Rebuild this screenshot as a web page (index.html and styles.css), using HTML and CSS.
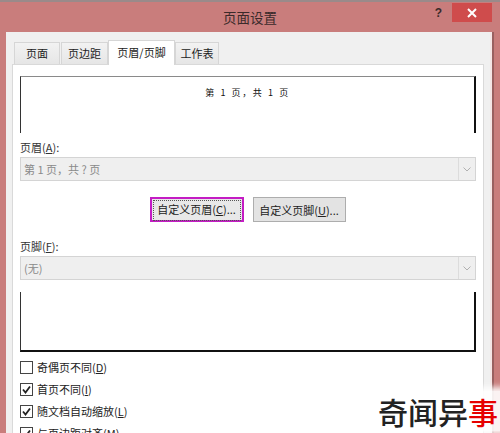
FILE: index.html
```html
<!DOCTYPE html>
<html lang="zh-CN">
<head>
	<meta charset="UTF-8">
	<title>页面设置</title>
	<link rel="stylesheet" href="styles.css">
</head>
<body>
	<div class="window">
		<div class="titlebar">
			<div></div>
			<div class="title">页面设置</div>
			<div class="controls">
				<span class="help">?</span>
				<span class="close">
					<svg width="10" height="10" viewBox="0 0 10 10"><path d="M1 1 L9 9 M9 1 L1 9" stroke="#fff" stroke-width="2"/></svg>
				</span>
			</div>
		</div>

		<div class="frame">
			<div class="tabs">
				<div class="tab t1">页面</div>
				<div class="tab t2">页边距</div>
				<div class="tab t3 active">页眉/页脚</div>
				<div class="tab t4">工作表</div>
			</div>

			<div class="panel">
				<div class="preview head-preview">
					<span class="preview-text">第 1 页，共 1 页</span>
				</div>

				<div class="label">页眉(<u>A</u>):</div>
				<div class="combo">
					<span class="combo-text">第 1 页，共 ? 页</span>
					<span class="combo-arrow">
						<svg width="8" height="5" viewBox="0 0 8 5"><path d="M0.5 0.5 L4 4 L7.5 0.5" fill="none" stroke="#b0b0b0" stroke-width="1"/></svg>
					</span>
				</div>

				<div class="buttons">
					<button class="btn focused"><span>自定义页眉(<u>C</u>)...</span></button>
					<button class="btn">自定义页脚(<u>U</u>)...</button>
				</div>

				<div class="label label-foot">页脚(<u>F</u>):</div>
				<div class="combo">
					<span class="combo-text">(无)</span>
					<span class="combo-arrow">
						<svg width="8" height="5" viewBox="0 0 8 5"><path d="M0.5 0.5 L4 4 L7.5 0.5" fill="none" stroke="#b0b0b0" stroke-width="1"/></svg>
					</span>
				</div>

				<div class="preview foot-preview"></div>

				<div class="checks">
					<label class="check"><span class="box"></span>奇偶页不同(<u>D</u>)</label>
					<label class="check"><span class="box checked"><svg width="11" height="11" viewBox="0 0 11 11"><path d="M2 5.5 L4.5 8.5 L9 2.5" fill="none" stroke="#222" stroke-width="1.8"/></svg></span>首页不同(<u>I</u>)</label>
					<label class="check"><span class="box checked"><svg width="11" height="11" viewBox="0 0 11 11"><path d="M2 5.5 L4.5 8.5 L9 2.5" fill="none" stroke="#222" stroke-width="1.8"/></svg></span>随文档自动缩放(<u>L</u>)</label>
					<label class="check"><span class="box checked"><svg width="11" height="11" viewBox="0 0 11 11"><path d="M2 5.5 L4.5 8.5 L9 2.5" fill="none" stroke="#222" stroke-width="1.8"/></svg></span>与页边距对齐(<u>M</u>)</label>
				</div>
			</div>
		</div>

		<div class="watermark">奇闻异<span class="red">事</span></div>
	</div>
</body>
</html>
```

FILE: styles.css
```css
html, body {
	margin: 0;
	padding: 0;
}

body {
	font-family: "Noto Sans CJK SC", "Noto Sans", sans-serif;
	font-size: 11px;
	color: #222;
	background: #c97d7c;
}

.window {
	position: relative;
	width: 500px;
	height: 433px;
	overflow: hidden;
	background: #c97d7c;
	border-top: 2px solid #9a8a8a;
	box-sizing: border-box;
}

.titlebar {
	display: grid;
	grid-template-columns: 1fr auto 1fr;
	align-items: start;
	height: 30px;
}

.title {
	margin-top: 5px;
	font-size: 13.5px;
	line-height: 20px;
	color: #3a2a2a;
}

.controls {
	display: flex;
	justify-content: flex-end;
	align-items: center;
	padding-right: 8px;
	padding-top: 1px;
}

.help {
	font-family: "Liberation Sans", sans-serif;
	font-weight: bold;
	font-size: 12px;
	color: #3a2a2a;
	margin-right: 10px;
}

.close {
	display: flex;
	align-items: center;
	justify-content: center;
	width: 40px;
	height: 19px;
	background: #cf4c4c;
}

.frame {
	margin: 0 10px 0 6px;
	padding: 8px 6px 0;
	height: 401px;
	box-sizing: border-box;
	background: #f0f0f0;
	box-shadow: 2px 0 0 #f4e6e6, 4px 0 0 #9a6060;
}

.tabs {
	display: flex;
	align-items: flex-end;
	padding-left: 2px;
	height: 24px;
}

.tab {
	height: 22px;
	box-sizing: border-box;
	border: 1px solid #d6d6d6;
	border-bottom: none;
	background: linear-gradient(#f2f2f2, #e6e6e6);
	text-align: center;
	line-height: 21px;
	margin-right: 1px;
}

.t1 { width: 46px; }
.t2 { width: 47px; }
.t3 { width: 67px; }
.t4 { width: 44px; }

.tab.active {
	position: relative;
	z-index: 1;
	height: 25px;
	margin-bottom: -1px;
	margin-left: -1px;
	margin-right: 0;
	background: #fff;
	line-height: 23px;
}

.panel {
	height: 380px;
	box-sizing: border-box;
	border: 1px solid #d9d9d9;
	background: #fff;
	padding: 11px 7px 0;
}

.preview {
	box-sizing: border-box;
	background: #fff;
}

.head-preview {
	height: 57px;
	border-top: 1px solid #8a8a8a;
	border-left: 1px solid #333;
	border-right: 2px solid #111;
	text-align: center;
	padding-top: 6px;
}

.preview-text {
	font-family: "Noto Sans CJK SC", sans-serif;
	font-size: 9px;
	letter-spacing: 1.6px;
	word-spacing: 1px;
	color: #111;
}

.foot-preview {
	height: 60px;
	margin-top: 12px;
	border-left: 1px solid #333;
	border-right: 2px solid #111;
	border-bottom: 2px solid #111;
}

.label {
	margin-top: 5px;
	line-height: 19px;
	color: #333;
}

.label-foot {
	margin-top: 15px;
}

u {
	text-decoration: underline;
	text-underline-offset: 1px;
}

.combo {
	display: flex;
	height: 24px;
	box-sizing: border-box;
	border: 1px solid #d4d4d4;
	background: #efefef;
}

.combo-text {
	flex: 1;
	padding-left: 3px;
	line-height: 22px;
	color: #8a8a8a;
}

.combo-arrow {
	display: flex;
	align-items: center;
	justify-content: center;
	width: 16px;
	border-left: 1px solid #dcdcdc;
}

.buttons {
	display: flex;
	justify-content: center;
	gap: 9px;
	margin-top: 16px;
	padding-right: 1px;
}

.btn {
	height: 25px;
	width: 93px;
	padding: 0;
	font-family: inherit;
	font-size: 11px;
	color: #222;
	background: #e3e3e3;
	border: 1px solid #adadad;
	box-sizing: border-box;
}

.btn.focused {
	width: 94px;
	border: 2px solid #c41cc4;
	background: #e8e8e8;
	padding: 1px;
}

.btn.focused span {
	display: block;
	height: 100%;
	line-height: 17px;
	border: 1px dotted #555;
}

.checks {
	margin-top: 4px;
}

.check {
	display: flex;
	align-items: center;
	height: 22px;
	color: #222;
}

.box {
	display: flex;
	align-items: center;
	justify-content: center;
	width: 13px;
	height: 13px;
	box-sizing: border-box;
	border: 1px solid #444;
	margin-right: 4px;
	background: #fff;
}

.watermark {
	position: absolute;
	left: 376px;
	top: 389px;
	padding: 0 4px 0 2px;
	font-family: "Noto Sans CJK SC", sans-serif;
	font-size: 30px;
	font-weight: 500;
	line-height: 40px;
	color: #222;
	background: rgba(255, 255, 255, 0.9);
	box-shadow: 0 0 6px 4px rgba(255, 255, 255, 0.9);
	white-space: nowrap;
}

.red {
	color: #e60000;
}
```
